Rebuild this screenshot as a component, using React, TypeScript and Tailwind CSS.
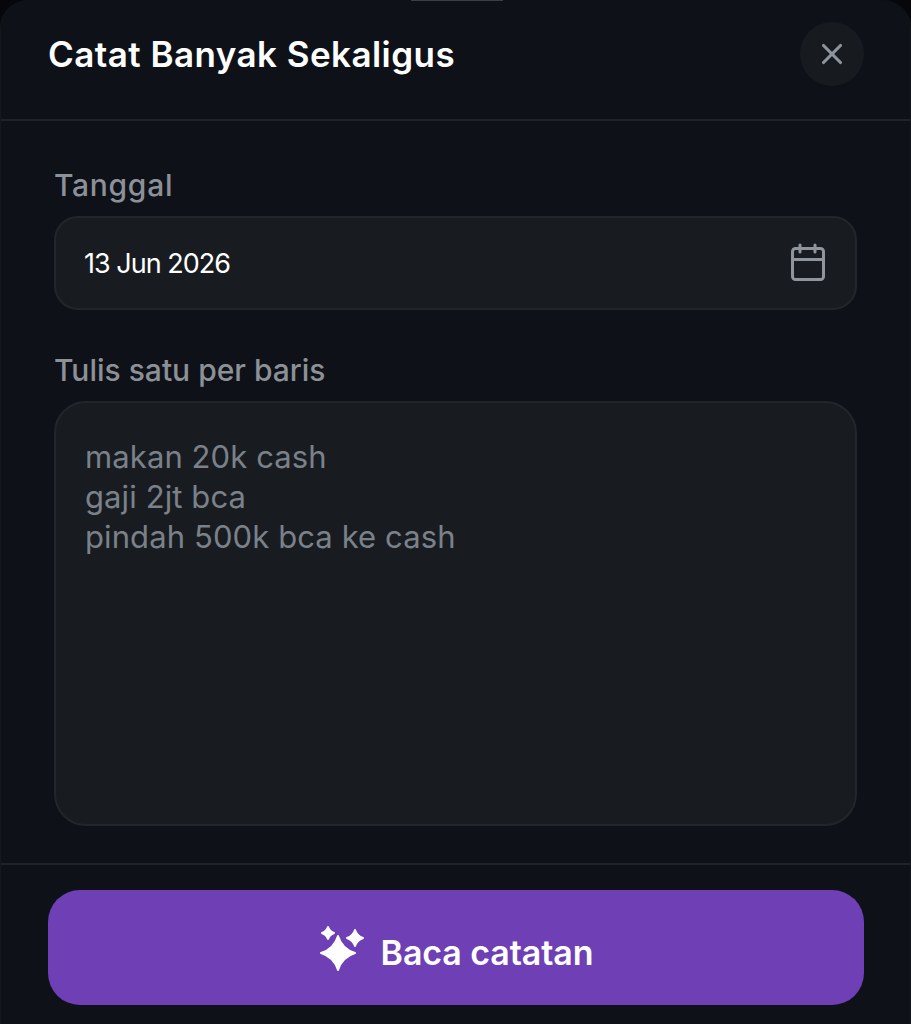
import React from 'react';
import { X } from 'lucide-react';

const font = "font-['Inter','Noto_Sans',sans-serif]";

const App: React.FC = () => {
  return (
    <div className={`h-[1024px] w-full bg-[#05070a] overflow-hidden ${font}`}>
      <div className="relative h-full w-full flex flex-col bg-[#0e1218] rounded-t-[28px] border-x border-[#14181d]">
        <div className="absolute top-0 left-[410px] w-[92px] h-[1px] bg-[#3a3f47]" />

        {/* Header */}
        <div className="h-[121px] shrink-0 flex items-center justify-between pl-[47px] pr-[46px] pb-[12px] border-b-2 border-[#1e2329]">
          <h1 className="text-[35px] leading-[40px] font-semibold tracking-[0.45px] text-white">Catat Banyak Sekaligus</h1>
          <button className="w-[64px] h-[64px] rounded-full bg-[#171b20] flex items-center justify-center text-[#8f959d]">
            <X size={34} strokeWidth={2.2} />
          </button>
        </div>

        {/* Form */}
        <div className="flex-1 flex flex-col px-[53px] pt-[44px] pb-[37px] border-b-2 border-[#1e2329]">
          <label className="text-[30px] leading-[40px] font-medium tracking-[0.7px] text-[#8c9097]">Tanggal</label>
          <div className="mt-[11px] h-[94px] shrink-0 flex items-center justify-between pl-[28px] pr-[28px] rounded-[24px] bg-[#181c21] border-2 border-[#22262b]">
            <span className="pt-[3px] text-[27px] tracking-[-1px] text-white">13 Jun 2026</span>
            <svg width="38" height="40" viewBox="0 0 38 40" fill="none" stroke="#8f959d" strokeWidth="3" strokeLinecap="round" strokeLinejoin="round">
              <rect x="3.5" y="5.5" width="31" height="31" rx="3" />
              <path d="M3.5 16.5h31" />
              <path d="M11 2v7" />
              <path d="M26 2v7" />
            </svg>
          </div>
          <label className="mt-[40px] text-[30px] leading-[40px] font-medium text-[#8c9097]">Tulis satu per baris</label>
          <div className="mt-[11px] flex-1 px-[29px] py-[34px] rounded-[32px] bg-[#181c21] border-2 border-[#22262b] text-[31px] leading-[40px] tracking-[0.1px] text-[#7b8189]">
            <div>makan 20k cash</div>
            <div>gaji 2jt bca</div>
            <div>pindah 500k bca ke cash</div>
          </div>
        </div>

        {/* Footer */}
        <div className="h-[159px] shrink-0 pl-[47px] pr-[46px] pt-[25px]">
          <button className="w-full h-[115px] rounded-[32px] bg-[#6e3fb5] flex items-center justify-center gap-[16px] text-white">
            <svg width="46" height="46" viewBox="0 0 46 46" fill="currentColor" stroke="currentColor" strokeWidth="2" strokeLinejoin="round">
              <path d="M19 11 Q23 24 36 28 Q23 32 19 45 Q15 32 2 28 Q15 24 19 11Z" />
              <path d="M9 2 Q10.6 6.4 15 8 Q10.6 9.6 9 14 Q7.4 9.6 3 8 Q7.4 6.4 9 2Z" />
              <path d="M36 5 Q38 11 44 13 Q38 15 36 21 Q34 15 28 13 Q34 11 36 5Z" />
            </svg>
            <span className="pt-[10px] text-[34px] font-semibold tracking-[-0.1px]">Baca catatan</span>
          </button>
        </div>
      </div>
    </div>
  );
};

export default App;
